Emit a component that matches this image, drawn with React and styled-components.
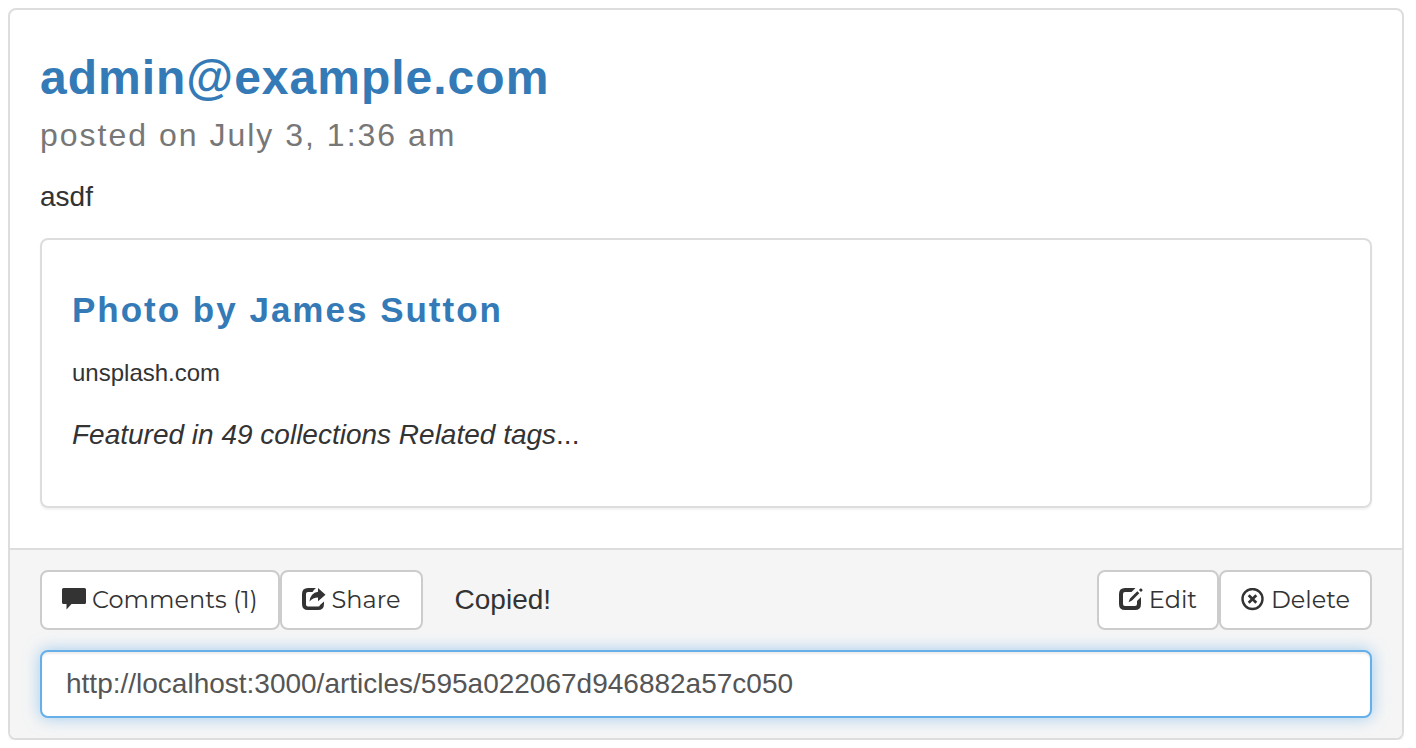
import React, { useState } from "react";
import styled, { createGlobalStyle } from "styled-components";

const GlobalStyle = createGlobalStyle`
  *, *::before, *::after { box-sizing: border-box; }
  body {
    margin: 8px 12px 8px 8px;
    background: #fff;
    color: #333;
    font: 28px/40px "Liberation Sans", Arial, sans-serif;
  }
  h3, h4, p { margin: 0; }
`;

const Panel = styled.article`
  background: #fff;
  border: 2px solid #ddd;
  border-radius: 8px;
  box-shadow: 0 2px 2px rgba(0, 0, 0, 0.05);
  overflow: hidden;
`;

const PanelBody = styled.div`
  padding: 41px 30px 40px;
`;

const Title = styled.h3`
  font-size: 48px;
  line-height: 53px;
  font-weight: 700;
  letter-spacing: 1px;
`;

const Subtitle = styled.p`
  margin: 14px 0 24px;
  font-size: 32px;
  line-height: 35px;
  letter-spacing: 2px;
  color: #777;
`;

const Link = styled.a`
  color: #337ab7;
  text-decoration: none;
`;

const Preview = styled.section`
  display: flex;
  flex-direction: column;
  gap: 25px;
  margin-top: 21px;
  padding: 50px 30px 51px;
  border: 2px solid #ddd;
  border-radius: 8px;
  box-shadow: 0 2px 2px rgba(0, 0, 0, 0.05);
`;

const PreviewTitle = styled.h4`
  font-size: 35px;
  line-height: 40px;
  font-weight: 700;
  letter-spacing: 2px;
`;

const Source = styled.p`
  font-size: 24px;
  line-height: 35px;
`;

const PanelFooter = styled.footer`
  display: flex;
  flex-direction: column;
  gap: 20px;
  padding: 20px 30px;
  background: #f5f5f5;
  border-top: 2px solid #ddd;
`;

const Toolbar = styled.div`
  display: flex;
  align-items: center;
`;

const Status = styled.span`
  margin: 0 auto 0 32px;
`;

const Button = styled.button`
  display: flex;
  align-items: center;
  gap: 6px;
  height: 60px;
  padding: 0 20px;
  border: 2px solid #ccc;
  border-radius: 8px;
  background: #fff;
  color: #333;
  font: 24px/34px Montserrat, Inter, sans-serif;
  white-space: nowrap;
  cursor: pointer;
`;

const Icon = styled.svg`
  flex: none;
  width: 24px;
  height: 24px;
`;

const UrlInput = styled.input`
  width: 100%;
  height: 68px;
  padding: 12px 24px;
  border: 2px solid #66afe9;
  border-radius: 8px;
  outline: none;
  background: #fff;
  color: #555;
  font: inherit;
  box-shadow: inset 0 2px 2px rgba(0, 0, 0, 0.075), 0 0 16px rgba(102, 175, 233, 0.6);
`;

const CommentIcon = () => (
  <Icon viewBox="0 0 24 24" aria-hidden="true">
    <path fill="currentColor" d="M1.500 0h21Q24 0 24 1.500v13Q24 16 22.500 16H9.500L4.500 21.500V16h-3Q0 16 0 14.500v-13Q0 0 1.500 0z" />
  </Icon>
);

const ShareIcon = () => (
  <Icon viewBox="0 0 24 24" aria-hidden="true">
    <path fill="currentColor" d="M14 0H6Q0 0 0 6v10q0 6 6 6h10q6 0 6-6v-2.500l-4 3.500q-.3 1.500-2 1.500H6q-2 0-2-2V6q0-2 2-2h4.500Q12 1.500 14 0z" />
    <path fill="currentColor" d="M16 0 23.500 6.700 16 13.200v-3.700q-5 0-8.500 4Q8.500 4.700 16 3.800z" />
  </Icon>
);

const EditIcon = () => (
  <Icon viewBox="0 0 24 24" aria-hidden="true">
    <path fill="currentColor" d="M16.500 0H6Q0 0 0 6v10q0 6 6 6h10q6 0 6-6V9l-4 4v3q0 2-2 2H6q-2 0-2-2V6q0-2 2-2h6.500z" />
    <path fill="currentColor" d="m9.500 14.200 1.500-3.700 7.300-7.300 2 2-7.300 7.300zM19.900 2l1.300-1.300q.7-.7 1.400 0l.7.700q.7.7 0 1.400L22 4.100z" />
  </Icon>
);

const DeleteIcon = () => (
  <Icon viewBox="0 0 24 24" aria-hidden="true">
    <g fill="none" stroke="currentColor">
      <circle cx="11.500" cy="11" r="10" strokeWidth="2.400" />
      <path strokeWidth="2.700" d="m7.700 7.200 7.600 7.600m0-7.600-7.600 7.600" />
    </g>
  </Icon>
);

export default function App() {
  const [url, setUrl] = useState("http://localhost:3000/articles/595a022067d946882a57c050");
  return (
    <>
      <GlobalStyle />
      <Panel>
        <PanelBody>
          <Title><Link href="#author">admin@example.com</Link></Title>
          <Subtitle>posted on July 3, 1:36 am</Subtitle>
          <p>asdf</p>
          <Preview>
            <PreviewTitle><Link href="#photo">Photo by James Sutton</Link></PreviewTitle>
            <Source>unsplash.com</Source>
            <p><em>Featured in 49 collections Related tags</em>...</p>
          </Preview>
        </PanelBody>
        <PanelFooter>
          <Toolbar>
            <Button type="button"><CommentIcon />Comments (1)</Button>
            <Button type="button"><ShareIcon />Share</Button>
            <Status role="status">Copied!</Status>
            <Button type="button"><EditIcon />Edit</Button>
            <Button type="button"><DeleteIcon />Delete</Button>
          </Toolbar>
          <UrlInput
            type="text"
            aria-label="Article link"
            value={url}
            onChange={(event) => setUrl(event.target.value)}
          />
        </PanelFooter>
      </Panel>
    </>
  );
}
